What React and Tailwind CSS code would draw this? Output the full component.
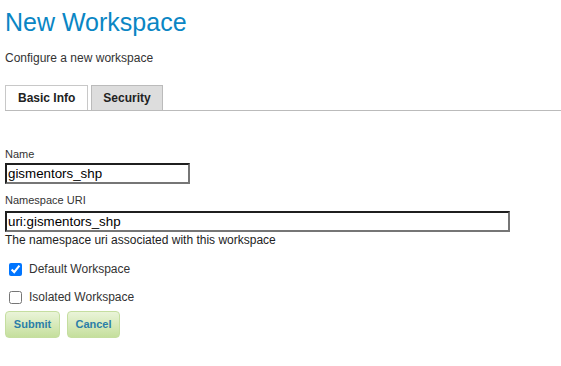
export default function App() {
  return (
    <div className="min-h-[366px] bg-white pl-[5px] font-['Liberation_Sans',Arial,sans-serif] text-[#333]">
      <h1 className="pt-[7px] text-[25px] leading-[30px] font-normal text-[#0a86c4]">New Workspace</h1>
      <p className="mt-[13px] text-[12px] leading-[16px]">Configure a new workspace</p>

      <div className="mt-[19px] flex items-end gap-[3px] border-b border-[#bbb]">
        <div className="h-[25px] border border-b-0 border-[#c8c8c8] bg-white px-[12px] pt-[4px] text-[12px] leading-[16px] font-bold text-[#222]">
          Basic Info
        </div>
        <div className="h-[25px] border border-b-0 border-[#bbb] bg-[#ddd] px-[11px] pt-[4px] text-[12px] leading-[16px] font-bold text-[#222]">
          Security
        </div>
      </div>

      <form className="flex flex-col items-start" onSubmit={(e) => e.preventDefault()}>
        <label className="mt-[36px] text-[11px] leading-[14px]">Name</label>
        <input
          type="text"
          defaultValue="gismentors_shp"
          className="mt-[2px] h-[21px] w-[185px] border-2 border-t-[#1f1f1f] border-l-[#1f1f1f] border-b-[#767676] border-r-[#767676] bg-white px-[1px] text-[13.33px] leading-[15px] text-black outline-none"
        />
        <label className="mt-[9px] text-[11px] leading-[14px]">Namespace URI</label>
        <input
          type="text"
          defaultValue="uri:gismentors_shp"
          className="mt-[4px] h-[21px] w-[505px] border-2 border-t-[#1f1f1f] border-l-[#1f1f1f] border-b-[#767676] border-r-[#767676] bg-white px-[1px] text-[13.33px] leading-[15px] text-black outline-none"
        />
        <p className="text-[12px] leading-[16px] text-[#222]">The namespace uri associated with this workspace</p>

        <label className="mt-[13px] flex items-center gap-[7px] text-[12px] leading-[16px]">
          <input type="checkbox" defaultChecked className="m-0 ml-[4px] h-[13px] w-[13px] accent-[#0075ff]" />
          <span>Default Workspace</span>
        </label>
        <label className="mt-[12px] flex items-center gap-[7px] text-[12px] leading-[16px]">
          <input type="checkbox" className="m-0 ml-[4px] h-[13px] w-[13px]" />
          <span>Isolated Workspace</span>
        </label>

        <div className="mt-[6px] flex gap-[7px]">
          <button
            type="submit"
            className="h-[27px] w-[55px] rounded-[4px] border border-[#c5dea0] bg-gradient-to-b from-[#eaf4d9] to-[#c5df9c] text-[11px] font-bold text-[#2b7ea8]"
          >
            Submit
          </button>
          <button
            type="button"
            className="h-[27px] w-[53px] rounded-[4px] border border-[#c5dea0] bg-gradient-to-b from-[#eaf4d9] to-[#c5df9c] text-[11px] font-bold text-[#2b7ea8]"
          >
            Cancel
          </button>
        </div>
      </form>
    </div>
  );
}
